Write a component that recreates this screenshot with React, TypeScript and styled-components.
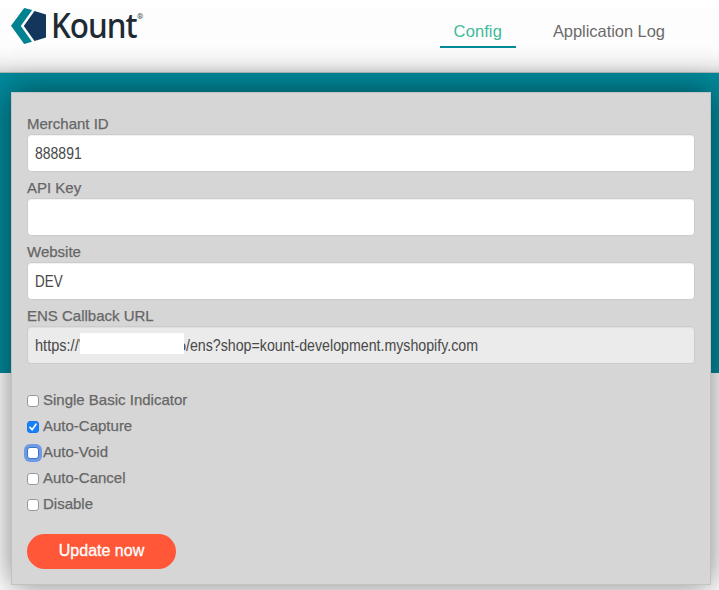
import React from "react";
import styled, { createGlobalStyle } from "styled-components";

const GlobalStyle = createGlobalStyle`
  *, *::before, *::after { box-sizing: border-box; }
  html, body { margin: 0; height: 590px; overflow: hidden; background: #fff; }
  body { font-family: "Liberation Sans", Arial, sans-serif; font-size: 15px; color: #666; }
`;

const Page = styled.div`
  width: 719px;
  height: 590px;
  overflow: hidden;
  background: linear-gradient(#fff 0 73px, #008a9c 73px 373px, #fff 373px);
`;

const Header = styled.header`
  display: flex;
  justify-content: space-between;
  height: 73px;
  padding: 0 40px 0 10px;
  border-bottom: 1px solid #b4b4b4;
  background: linear-gradient(#fff 0 7px, #fdfdfd 7px 46px, #f6f6f6 57px, #ebebeb 65px, #dadada 72px);
`;

const Brand = styled.div`
  display: flex;
  align-items: flex-start;
  padding-top: 8px;
`;

const Mark = styled.svg`
  display: block;
  width: 36px;
  height: 36px;
`;

const Wordmark = styled.span`
  width: 86px;
  margin: -3px 0 0 5px;
  font: 500 34px/41px "Noto Sans", sans-serif;
  letter-spacing: -1.1px;
  color: #202a33;
  transform: scaleX(0.925);
  transform-origin: left;
`;

const Registered = styled.span`
  margin-top: 4px;
  font: 700 8px/10px Roboto, sans-serif;
  color: #4a5259;
`;

const Nav = styled.nav`
  display: flex;
  align-items: flex-start;
  gap: 23px;
  padding-top: 17px;
`;

const NavLink = styled.a<{ $active?: boolean; $spacing: number }>`
  height: 31px;
  padding: 0 14px;
  border-bottom: 2px solid ${(p) => (p.$active ? "#008a9c" : "transparent")};
  font-size: 16.5px;
  line-height: 29px;
  letter-spacing: ${(p) => p.$spacing}px;
  white-space: nowrap;
  color: ${(p) => (p.$active ? "#3dbb98" : "#6c6c6c")};
`;

const Card = styled.main`
  width: 700px;
  height: 493px;
  margin: 19px 0 0 11px;
  padding: 21px 16px 0 15px;
  border: 1px solid #c2c2c2;
  background: #d6d6d6;
  box-shadow: 0 0 30px rgba(0, 0, 0, 0.5);
`;

const Field = styled.div`
  height: 64px;
`;

const Label = styled.label`
  display: block;
  height: 20px;
  font-size: 15px;
  line-height: 19px;
  color: #666;
  -webkit-text-stroke: 0.25px #666;
`;

const Control = styled.div<{ $readOnly?: boolean }>`
  display: flex;
  align-items: center;
  width: 668px;
  height: 38px;
  padding: 1px 7px 0;
  border: 1px solid #ccc;
  border-radius: 4px;
  background: ${(p) => (p.$readOnly ? "#ebebeb" : "#fff")};
  box-shadow: inset 0 1px 1px rgba(0, 0, 0, 0.06);
  font-size: 15px;
  line-height: 20px;
  white-space: pre;
  color: #484848;
`;

const Condensed = styled.span<{ $scale: number }>`
  display: block;
  font-size: 16px;
  transform: scaleX(${(p) => p.$scale});
  transform-origin: left;
`;

const Redaction = styled.span`
  flex: none;
  width: 104px;
  height: 21px;
  margin: -5px 0 0;
  background: #fff;
`;

const Clip = styled.span<{ $width: number; $end?: boolean }>`
  display: flex;
  justify-content: ${(p) => (p.$end ? "flex-end" : "flex-start")};
  flex: none;
  width: ${(p) => p.$width}px;
  overflow: hidden;
`;

const Options = styled.div`
  display: flex;
  flex-direction: column;
  padding-top: 17px;
`;

const Option = styled.label`
  display: flex;
  align-items: center;
  gap: 4px;
  height: 26px;
  font-size: 15px;
  line-height: 20px;
  -webkit-text-stroke: 0.25px #666;
`;

const Box = styled.span<{ $checked?: boolean; $focused?: boolean }>`
  width: 12px;
  height: 12px;
  margin-top: 2px;
  border: 1px solid ${(p) => (p.$checked ? "#1677f2" : p.$focused ? "#3b72c4" : "#9a9a9a")};
  border-radius: 3px;
  background: ${(p) => (p.$checked ? "#1780fb" : "#fff")};
  box-shadow: ${(p) => (p.$focused ? "0 0 0 3px #6c9be3" : "none")};
  svg { display: block; width: 10px; height: 10px; }
`;

const Submit = styled.button`
  display: block;
  width: 149px;
  height: 35px;
  margin-top: 17px;
  padding: 0 0 2px;
  border: 0;
  border-radius: 18px;
  background: #ff5738;
  color: #fff;
  font: 16px/20px "Liberation Sans", Arial, sans-serif;
  -webkit-text-stroke: 0.3px #fff;
`;

const fields = [
  { label: "Merchant ID", value: "888891", scale: 0.875 },
  { label: "API Key", value: "", scale: 1 },
  { label: "Website", value: "DEV", scale: 0.84 },
];

const options = [
  { label: "Single Basic Indicator" },
  { label: "Auto-Capture", checked: true },
  { label: "Auto-Void", focused: true },
  { label: "Auto-Cancel" },
  { label: "Disable" },
];

export default function App() {
  return (
    <Page>
      <GlobalStyle />
      <Header>
        <Brand>
          <Mark viewBox="0 0 36 36">
            <path d="M14.2 0 1 17.8 14.2 36 22 33.8 10.8 18 22.2 2Z" fill="#008291" />
            <path d="M24.5 3 36 6.5V29.5L24.5 33 13.8 18Z" fill="#12365c" />
          </Mark>
          <Wordmark>Kount</Wordmark>
          <Registered>®</Registered>
        </Brand>
        <Nav>
          <NavLink $active $spacing={0.1}>Config</NavLink>
          <NavLink $spacing={-0.05}>Application Log</NavLink>
        </Nav>
      </Header>
      <Card>
        {fields.map((f) => (
          <Field key={f.label}>
            <Label>{f.label}</Label>
            <Control>
              <Condensed $scale={f.scale}>{f.value}</Condensed>
            </Control>
          </Field>
        ))}
        <Field>
          <Label>ENS Callback URL</Label>
          <Control $readOnly>
            <Clip $width={45}>
              <Condensed $scale={0.91}>https://'</Condensed>
            </Clip>
            <Redaction />
            <Clip $width={2} $end>o</Clip>
            <Condensed $scale={0.887}>/ens?shop=kount-development.myshopify.com</Condensed>
          </Control>
        </Field>
        <Options>
          {options.map((o) => (
            <Option key={o.label}>
              <Box $checked={o.checked} $focused={o.focused}>
                {o.checked && (
                  <svg viewBox="0 0 10 10">
                    <path d="M2 5.4 4.1 7.8 8 2.2" fill="none" stroke="#fff" strokeWidth="1.6" strokeLinecap="round" strokeLinejoin="round" />
                  </svg>
                )}
              </Box>
              {o.label}
            </Option>
          ))}
        </Options>
        <Submit>Update now</Submit>
      </Card>
    </Page>
  );
}
